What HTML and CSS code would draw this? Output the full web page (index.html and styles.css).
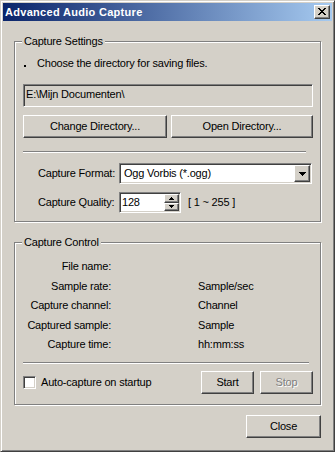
FILE: index.html
```html
<!DOCTYPE html>
<html>
<head>
<meta charset="utf-8">
<title>Advanced Audio Capture</title>
<link rel="stylesheet" href="styles.css">
</head>
<body>
<div class="window">
  <div class="titlebar">
    <span class="title">Advanced Audio Capture</span>
    <button class="caption-btn raised" aria-label="Close">
      <svg class="x-glyph" width="8" height="7" viewBox="0 0 8 7" shape-rendering="crispEdges">
        <path d="M0 0h2v1H0zM6 0h2v1H6zM1 1h2v1H1zM5 1h2v1H5zM2 2h4v1H2zM3 3h2v1H3zM2 4h4v1H2zM1 5h2v1H1zM5 5h2v1H5zM0 6h2v1H0zM6 6h2v1H6z" fill="#000"/>
      </svg>
    </button>
  </div>
  <div class="client">
    <section class="group group-settings">
      <span class="legend">Capture Settings</span>
      <div class="hint"><span class="dot"></span>Choose the directory for saving files.</div>
      <div class="path-field sunken">E:\Mijn Documenten\</div>
      <div class="btn-row">
        <button class="btn raised btn-change">Change Directory...</button>
        <button class="btn raised btn-open">Open Directory...</button>
      </div>
      <div class="etched etched-settings"></div>
      <div class="field-row format-row">
        <span class="field-label">Capture Format:</span>
        <div class="combo sunken">
          <span class="combo-text">Ogg Vorbis (*.ogg)</span>
          <span class="combo-btn raised">
            <svg width="7" height="4" viewBox="0 0 7 4" shape-rendering="crispEdges"><path d="M0 0h7v1H0zM1 1h5v1H1zM2 2h3v1H2zM3 3h1v1H3z" fill="#000"/></svg>
          </span>
        </div>
      </div>
      <div class="field-row quality-row">
        <span class="field-label">Capture Quality:</span>
        <div class="spin sunken">
          <span class="spin-text">128</span>
          <span class="spin-btns">
            <span class="spin-btn raised"><svg width="5" height="3" viewBox="0 0 5 3" shape-rendering="crispEdges"><path d="M2 0h1v1H2zM1 1h3v1H1zM0 2h5v1H0z" fill="#000"/></svg></span>
            <span class="spin-btn raised"><svg width="5" height="3" viewBox="0 0 5 3" shape-rendering="crispEdges"><path d="M0 0h5v1H0zM1 1h3v1H1zM2 2h1v1H2z" fill="#000"/></svg></span>
          </span>
        </div>
        <span class="range">[ 1 ~ 255 ]</span>
      </div>
    </section>

    <section class="group group-control">
      <span class="legend">Capture Control</span>
      <div class="info-grid">
        <span class="info-label">File name:</span><span class="info-value"></span>
        <span class="info-label">Sample rate:</span><span class="info-value">Sample/sec</span>
        <span class="info-label">Capture channel:</span><span class="info-value">Channel</span>
        <span class="info-label">Captured sample:</span><span class="info-value">Sample</span>
        <span class="info-label">Capture time:</span><span class="info-value">hh:mm:ss</span>
      </div>
      <div class="etched etched-control"></div>
      <div class="control-row">
        <label class="check">
          <span class="check-box sunken"></span>
          <span class="check-label">Auto-capture on startup</span>
        </label>
        <button class="btn raised btn-start">Start</button>
        <button class="btn raised btn-stop" disabled>Stop</button>
      </div>
    </section>

    <div class="footer">
      <button class="btn raised btn-close">Close</button>
    </div>
  </div>
</div>
</body>
</html>
```

FILE: styles.css
```css
* {
  box-sizing: border-box;
}

html,
body {
  margin: 0;
  padding: 0;
}

body {
  background: #d4d0c8;
  color: #000;
  font-family: "Liberation Sans", Arial, sans-serif;
  font-size: 11px;
  line-height: 13px;
  letter-spacing: -0.2px;
}

/* ---------- window frame ---------- */
.window {
  width: 335px;
  height: 452px;
  background: #d4d0c8;
  border: 1px solid;
  border-color: #d4d0c8 #404040 #404040 #d4d0c8;
  box-shadow: inset 1px 1px 0 #fff, inset -1px -1px 0 #808080;
  padding: 2px;
  display: flex;
  flex-direction: column;
}

.titlebar {
  height: 18px;
  margin-bottom: 1px;
  background: linear-gradient(to right, #0a246a, #a6caf0);
  display: flex;
  align-items: center;
  padding: 0 2px 0 2px;
}

.title {
  flex: 1;
  color: #fff;
  font-weight: bold;
  letter-spacing: 0.3px;
  white-space: nowrap;
}

/* ---------- common 3D styles ---------- */
.raised {
  background: #d4d0c8;
  border: 1px solid;
  border-color: #fff #404040 #404040 #fff;
  box-shadow: inset -1px -1px 0 #808080;
}

.sunken {
  border: 1px solid;
  border-color: #808080 #fff #fff #808080;
  box-shadow: inset 1px 1px 0 #404040, inset -1px -1px 0 #d4d0c8;
}

.etched {
  height: 2px;
  border-top: 1px solid #808080;
  border-bottom: 1px solid #fff;
}

button {
  font: inherit;
  letter-spacing: inherit;
  color: #000;
  margin: 0;
  padding: 0;
}

.caption-btn {
  width: 16px;
  height: 14px;
  display: flex;
  align-items: flex-start;
  justify-content: center;
  padding-top: 2px;
}

.x-glyph {
  display: block;
}

.btn {
  height: 23px;
  line-height: 13px;
  text-align: center;
}

/* ---------- client area ---------- */
.client {
  display: flex;
  flex-direction: column;
}

.group {
  position: relative;
  border: 1px solid #808080;
  box-shadow: 1px 1px 0 #fff, inset 1px 1px 0 #fff;
  margin: 0 11px;
  padding: 0 7px 0 8px;
}

.legend {
  position: absolute;
  top: -7px;
  left: 7px;
  padding: 0 2px;
  background: #d4d0c8;
  white-space: nowrap;
}

/* ---------- capture settings ---------- */
.group-settings {
  margin-top: 19px;
  padding-bottom: 8px;
}

.hint {
  margin-top: 15px;
  display: flex;
  align-items: baseline;
  white-space: nowrap;
}

.dot {
  width: 2px;
  height: 2px;
  background: #000;
  margin: 0 11px 0 1px;
}

.path-field {
  margin-top: 14px;
  height: 23px;
  width: 290px;
  background: #d4d0c8;
  padding-left: 2px;
  line-height: 18px;
  white-space: nowrap;
}

.btn-row {
  margin-top: 8px;
  display: flex;
  gap: 4px;
}

.btn-change {
  width: 144px;
}

.btn-open {
  width: 142px;
}

.etched-settings {
  margin-top: 13px;
  width: 283px;
}

.field-row {
  display: flex;
  align-items: center;
  height: 21px;
}

.format-row {
  margin-top: 10px;
}

.quality-row {
  margin-top: 8px;
}

.field-label {
  width: 96px;
  padding-left: 15px;
  white-space: nowrap;
}

.combo {
  width: 193px;
  height: 21px;
  background: #fff;
  display: flex;
  align-items: stretch;
  padding: 1px;
}

.combo-text {
  flex: 1;
  padding-left: 3px;
  line-height: 17px;
  white-space: nowrap;
}

.combo-btn {
  width: 16px;
  display: flex;
  align-items: center;
  justify-content: center;
}

.spin {
  width: 62px;
  height: 21px;
  background: #fff;
  display: flex;
  padding: 1px;
}

.spin-text {
  flex: 1;
  padding-left: 1px;
  line-height: 17px;
}

.spin-btns {
  width: 15px;
  display: flex;
  flex-direction: column;
}

.spin-btn {
  flex: 1;
  display: flex;
  align-items: center;
  justify-content: center;
}

.range {
  margin-left: 7px;
  white-space: nowrap;
}

/* ---------- capture control ---------- */
.group-control {
  margin-top: 20px;
  padding-bottom: 10px;
}

.info-grid {
  margin-top: 17px;
  display: grid;
  grid-template-columns: 88px 1fr;
  grid-auto-rows: 13px;
  column-gap: 87px;
  row-gap: 6.5px;
  white-space: nowrap;
}

.info-label {
  text-align: right;
}

.etched-control {
  margin-top: 11px;
  width: 286px;
}

.control-row {
  margin-top: 7px;
  height: 23px;
  display: flex;
  align-items: center;
}

.check {
  display: flex;
  align-items: center;
  flex: 1;
}

.check-box {
  width: 13px;
  height: 13px;
  background: #fff;
}

.check-label {
  margin-left: 5px;
  white-space: nowrap;
}

.btn-start,
.btn-stop {
  width: 53px;
}

.btn-stop {
  margin-left: 6px;
  color: #808080;
  text-shadow: 1px 1px 0 #fff;
}

/* ---------- footer ---------- */
.footer {
  margin-top: 10px;
  padding-right: 11px;
  display: flex;
  justify-content: flex-end;
}

.btn-close {
  width: 75px;
}
```
